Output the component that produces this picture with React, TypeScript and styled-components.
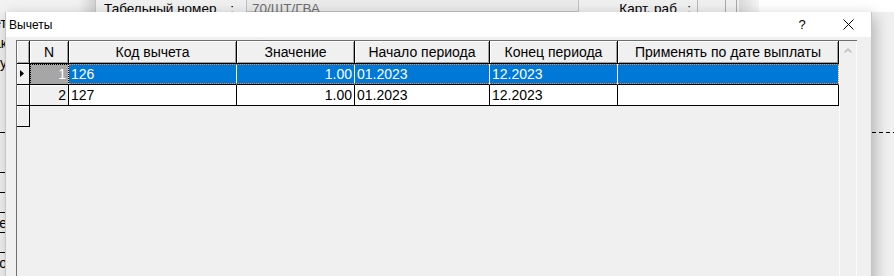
import React from "react";
import styled, { createGlobalStyle } from "styled-components";

type Align = "left" | "right" | "center";

type Deduction = {
  n: number;
  code: string;
  value: string;
  start: string;
  end: string;
  byPayDate: string;
};

type Column = { key: keyof Deduction; title: string; width: number; align: Align };

const columns: Column[] = [
  { key: "code", title: "Код вычета", width: 168, align: "left" },
  { key: "value", title: "Значение", width: 118, align: "right" },
  { key: "start", title: "Начало периода", width: 135, align: "left" },
  { key: "end", title: "Конец периода", width: 128, align: "left" },
  { key: "byPayDate", title: "Применять по дате выплаты", width: 221, align: "left" },
];

const rows: Deduction[] = [
  { n: 1, code: "126", value: "1.00", start: "01.2023", end: "12.2023", byPayDate: "" },
  { n: 2, code: "127", value: "1.00", start: "01.2023", end: "12.2023", byPayDate: "" },
];

const template = `13px 39px ${columns.map((c) => c.width + "px").join(" ")}`;

// хвосты подписей основной формы, торчащие слева из-под диалога
const strip: { text?: string; line?: boolean }[] = [
  { text: "Отчет" },
  { text: "Признак" },
  { text: "Налогу" },
  {},
  {},
  {},
  { line: true },
  {},
  { line: true },
  { line: true },
  { line: true, text: "Тип ставке" },
  { line: true },
  { line: true, text: "Место" },
];

const GlobalStyle = createGlobalStyle`
  html, body {
    margin: 0;
    padding: 0;
  }
  body {
    width: 894px;
    height: 276px;
    overflow: hidden;
    background: #f0f0f0;
    font-family: "Liberation Sans", Arial, sans-serif;
  }
`;

const Desktop = styled.div`
  position: relative;
  width: 894px;
  height: 276px;
  overflow: hidden;
  background: #f0f0f0;
`;

/* ---------- основная форма на заднем плане ---------- */

const BackWindow = styled.div`
  display: flex;
  flex-direction: column;
  height: 100%;
`;

const TopBand = styled.div`
  display: flex;
  height: 12px;
  overflow: hidden;
  font-size: 13.5px;
  line-height: 16px;
  color: #000;
`;

const TopPanel = styled.div`
  width: 95px;
  background: linear-gradient(to right, #f2f2f2 0, #f2f2f2 78px, #d2d2d2 95px);
  border-right: 1px solid #c4c4c4;
`;

const FieldLabel = styled.div<{ $width: number; $pad: number }>`
  width: ${(p) => p.$width}px;
  box-sizing: border-box;
  display: flex;
  justify-content: space-between;
  padding: 1px ${(p) => p.$pad}px 0 8px;
`;

const FieldBox = styled.div`
  width: 333px;
  box-sizing: border-box;
  background: #ebebeb;
  border: 1px solid #c2c2c2;
  border-top: none;
  color: #6d6d6d;
  padding: 1px 0 0 5px;
`;

const Gap = styled.div<{ $width: number }>`
  width: ${(p) => p.$width}px;
`;

const Divider = styled.div`
  width: 1px;
  background: #b9b9b9;
`;

const SmallBox = styled.div`
  width: 10px;
  height: 14px;
  border: 1px solid #a9a9a9;
  border-top: none;
  margin-left: 27px;
`;

const Shade = styled.div`
  width: 20px;
  margin-left: 2px;
  background: linear-gradient(to right, #dadada, #f6f6f6);
`;

const WhiteFill = styled.div`
  flex: 1;
  background: #fff;
`;

const BackBody = styled.div`
  flex: 1;
  display: flex;
`;

const LeftStrip = styled.div`
  width: 7px;
  display: flex;
  flex-direction: column;
  overflow: hidden;
`;

const StripRow = styled.div<{ $line?: boolean }>`
  height: 20px;
  box-sizing: border-box;
  border-top: 1px solid ${(p) => (p.$line ? "#000" : "transparent")};
  display: flex;
  justify-content: flex-end;
  align-items: center;
  white-space: nowrap;
  font-size: 14px;
  color: #000;
`;

const Middle = styled.div`
  flex: 1;
`;

const RightStrip = styled.div`
  width: 22px;
  padding-top: 120px;
`;

const DashedRule = styled.div`
  height: 1px;
  background: repeating-linear-gradient(to right, #000 0, #000 4px, transparent 4px, transparent 7px);
`;

/* ---------- диалог «Вычеты» ---------- */

const Dialog = styled.div`
  position: absolute;
  left: 5px;
  top: 12px;
  width: 867px;
  height: 290px;
  box-sizing: border-box;
  display: flex;
  flex-direction: column;
  background: #f0f0f0;
  border: 1px solid #c6c6c6;
  border-top: none;
  box-shadow: 3px 4px 14px rgba(0, 0, 0, 0.26);
`;

const TitleBar = styled.div`
  height: 25px;
  display: flex;
  align-items: center;
  background: #fff;
`;

const TitleText = styled.div`
  flex: 1;
  padding-left: 3px;
  font-size: 12px;
  color: #000;
`;

const TitleButton = styled.div`
  width: 46px;
  height: 100%;
  display: flex;
  align-items: center;
  justify-content: center;
  font-size: 13px;
  color: #000;
`;

const DialogBody = styled.div`
  flex: 1;
  padding: 3px 0 0 10px;
  display: flex;
  min-height: 0;
`;

const DataGrid = styled.div`
  width: 841px;
  box-sizing: border-box;
  display: flex;
  border-left: 1px solid #6e6e6e;
  border-top: 1px solid #6e6e6e;
  background: #f0f0f0;
`;

const Table = styled.div`
  width: 822px;
  display: flex;
  flex-direction: column;
  font-size: 14px;
`;

const HeaderRow = styled.div`
  display: grid;
  grid-template-columns: ${template};
  height: 23px;
`;

const HeaderCell = styled.div`
  box-sizing: border-box;
  display: flex;
  align-items: center;
  justify-content: center;
  padding-bottom: 1px;
  background: #f0f0f0;
  color: #000;
  border-right: 1px solid #000;
  border-bottom: 1px solid #000;
  box-shadow: inset 1px 1px 0 #fff, inset -1px -1px 0 #a0a0a0;
  white-space: nowrap;
  overflow: hidden;
`;

const Row = styled.div<{ $selected?: boolean }>`
  position: relative;
  display: grid;
  grid-template-columns: ${template};
  height: 21px;

  &::after {
    content: "";
    display: ${(p) => (p.$selected ? "block" : "none")};
    position: absolute;
    left: 52px;
    right: 0;
    top: 0;
    bottom: 1px;
    border: 1px dotted #ff8a2a;
    border-left: none;
    pointer-events: none;
  }
`;

const IndicatorCell = styled.div`
  box-sizing: border-box;
  display: flex;
  align-items: center;
  padding: 0 0 2px 3px;
  background: #f0f0f0;
  border-right: 1px solid #000;
  border-bottom: 1px solid #000;
  box-shadow: inset 1px 1px 0 #fff;
`;

const NumberCell = styled.div<{ $selected?: boolean }>`
  position: relative;
  box-sizing: border-box;
  display: flex;
  align-items: center;
  justify-content: flex-end;
  padding-right: 2px;
  background: ${(p) => (p.$selected ? "#a6a6a6" : "#f0f0f0")};
  color: ${(p) => (p.$selected ? "#fff" : "#000")};
  border-right: 1px solid ${(p) => (p.$selected ? "#e8e8e8" : "#000")};
  border-bottom: 1px solid #000;
  box-shadow: ${(p) => (p.$selected ? "none" : "inset 1px 1px 0 #fff")};
  outline: ${(p) => (p.$selected ? "1px dotted #000" : "none")};
  outline-offset: -1px;
`;

const DataCell = styled.div<{ $align: Align; $selected?: boolean }>`
  box-sizing: border-box;
  display: flex;
  align-items: center;
  justify-content: ${(p) => (p.$align === "right" ? "flex-end" : "flex-start")};
  padding: 0 2px;
  background: ${(p) => (p.$selected ? "#0078d7" : "#fff")};
  color: ${(p) => (p.$selected ? "#fff" : "#000")};
  border-right: 1px solid ${(p) => (p.$selected ? "#f4f4f4" : "#000")};
  border-bottom: 1px solid #000;
  white-space: nowrap;
  overflow: hidden;
`;

const Scrollbar = styled.div`
  width: 18px;
  box-sizing: border-box;
  display: flex;
  justify-content: center;
  padding-top: 7px;
  background: #f0f0f0;
  border-left: 1px solid #fbfbfb;
  border-right: 1px solid #fbfbfb;
`;

const RowMarker = () => (
  <svg width="4" height="7" viewBox="0 0 4 7">
    <polygon points="0,0 4,3.5 0,7" fill="#000" />
  </svg>
);

const CloseIcon = () => (
  <svg width="11" height="11" viewBox="0 0 11 11">
    <path d="M0.5 0.5 L10.5 10.5 M10.5 0.5 L0.5 10.5" stroke="#000" strokeWidth="1" fill="none" />
  </svg>
);

const ArrowUp = () => (
  <svg width="8" height="5" viewBox="0 0 8 5">
    <polyline points="0.8,4.4 4,1.2 7.2,4.4" stroke="#c2c2c2" strokeWidth="1.6" fill="none" />
  </svg>
);

const DeductionsDialog = () => (
  <Dialog>
    <TitleBar>
      <TitleText>Вычеты</TitleText>
      <TitleButton>?</TitleButton>
      <TitleButton>
        <CloseIcon />
      </TitleButton>
    </TitleBar>
    <DialogBody>
      <DataGrid>
        <Table>
          <HeaderRow>
            <HeaderCell />
            <HeaderCell>N</HeaderCell>
            {columns.map((c) => (
              <HeaderCell key={c.key}>{c.title}</HeaderCell>
            ))}
          </HeaderRow>
          {rows.map((r, i) => {
            const selected = i === 0;
            return (
              <Row key={r.n} $selected={selected}>
                <IndicatorCell>{selected && <RowMarker />}</IndicatorCell>
                <NumberCell $selected={selected}>{r.n}</NumberCell>
                {columns.map((c) => (
                  <DataCell key={c.key} $align={c.align} $selected={selected}>
                    {r[c.key]}
                  </DataCell>
                ))}
              </Row>
            );
          })}
          <Row>
            <IndicatorCell />
          </Row>
        </Table>
        <Scrollbar>
          <ArrowUp />
        </Scrollbar>
      </DataGrid>
    </DialogBody>
  </Dialog>
);

const App = () => (
  <>
    <GlobalStyle />
    <Desktop>
      <BackWindow>
        <TopBand>
          <TopPanel />
          <FieldLabel $width={150} $pad={12}>
            <span>Табельный номер</span>
            <span>:</span>
          </FieldLabel>
          <FieldBox>70/ШТ/ГВА</FieldBox>
          <FieldLabel $width={118} $pad={6}>
            <Gap $width={22} />
            <span>Карт. раб</span>
            <span>:</span>
          </FieldLabel>
          <Divider />
          <SmallBox />
          <Shade />
          <WhiteFill />
        </TopBand>
        <BackBody>
          <LeftStrip>
            {strip.map((s, i) => (
              <StripRow key={i} $line={s.line}>
                {s.text}
              </StripRow>
            ))}
          </LeftStrip>
          <Middle />
          <RightStrip>
            <DashedRule />
          </RightStrip>
        </BackBody>
      </BackWindow>
      <DeductionsDialog />
    </Desktop>
  </>
);

export default App;
